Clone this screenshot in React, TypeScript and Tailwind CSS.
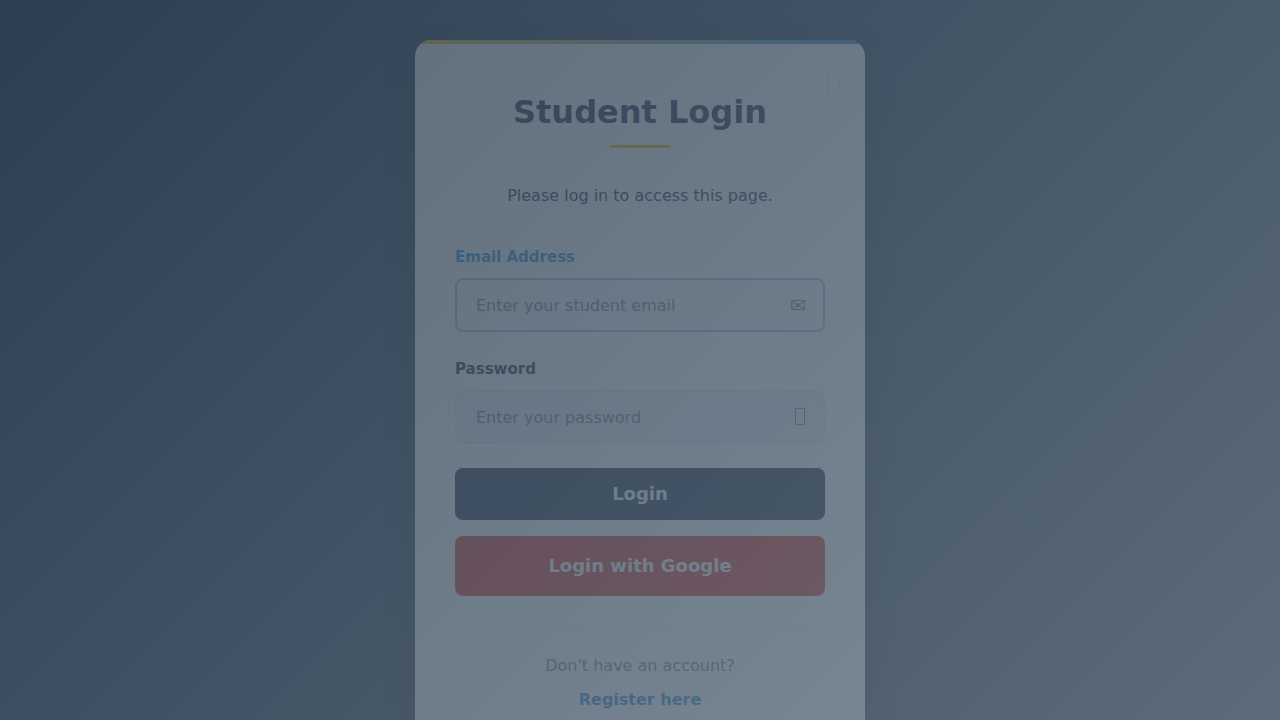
import type { ReactNode } from "react";

type FieldProps = {
  id: string;
  label: string;
  type: string;
  placeholder: string;
  active?: boolean;
  icon: ReactNode;
};

function Field({ id, label, type, placeholder, active = false, icon }: FieldProps) {
  return (
    <div className="mb-6">
      <label
        htmlFor={id}
        className={
          active
            ? "mb-2 block text-[15px] leading-[26px] font-semibold text-[#3498db]"
            : "mb-2 block text-[15px] leading-[26px] font-semibold text-[#2c3e50]"
        }
      >
        {label}
      </label>
      <div className="relative">
        <input
          id={id}
          type={type}
          placeholder={placeholder}
          className={
            active
              ? "block h-[54px] w-full rounded-lg border-2 border-[#a9cbe3] bg-[#f8fbfe] pr-12 pl-[19px] text-base text-[#2c3e50] outline-none placeholder:text-[#7f8c8d]"
              : "block h-[54px] w-full rounded-lg border-2 border-[#ecf0f1] bg-[#f3f5fa] pr-12 pl-[19px] text-base text-[#2c3e50] outline-none placeholder:text-[#7f8c8d]"
          }
        />
        <span
          aria-hidden="true"
          className="pointer-events-none absolute inset-y-0 right-[19px] flex items-center text-[19px] leading-none text-[#7f8c8d]"
        >
          {icon}
        </span>
      </div>
    </div>
  );
}

export default function App() {
  return (
    <main className="flex min-h-screen items-start justify-center bg-linear-[135deg,#2c3e50,#5d6d7e] p-10 font-['DejaVu_Sans',sans-serif] text-base text-[#2c3e50]">
      <section className="relative w-full max-w-[450px] overflow-hidden rounded-2xl bg-white px-10 pt-12 pb-10 opacity-[0.22] shadow-[0_10px_30px_rgba(0,0,0,0.2)]">
        <div className="absolute inset-x-0 top-0 h-1 bg-linear-to-r from-[#f1c40f] to-[#3498db]" />
        <svg
          aria-hidden="true"
          className="absolute top-8 right-6 h-6 w-4"
          viewBox="0 0 16 24"
          fill="none"
          stroke="#2c3e50"
          strokeOpacity="0.1"
        >
          <rect x="2.5" y="1.5" width="12" height="21" />
        </svg>

        <header className="text-center">
          <h1 className="text-[32px] leading-[48px] font-bold">Student Login</h1>
          <div className="mx-auto mt-[9px] h-[3px] w-[60px] rounded-sm bg-[#f1c40f]" />
        </header>

        <p className="my-[35px] text-center leading-[26px]">Please log in to access this page.</p>

        <form onSubmit={(event) => event.preventDefault()}>
          <Field
            id="email"
            label="Email Address"
            type="email"
            placeholder="Enter your student email"
            active
            icon="✉"
          />
          <Field
            id="password"
            label="Password"
            type="password"
            placeholder="Enter your password"
            icon={
              <svg className="h-[18px] w-3" viewBox="0 0 12 18" fill="none" stroke="currentColor">
                <rect x="1.5" y="0.5" width="9" height="16" />
              </svg>
            }
          />
          <button
            type="submit"
            className="block h-[52px] w-full rounded-lg bg-[#2c3e50] text-lg font-semibold text-white"
          >
            Login
          </button>
          <a
            href="#google"
            className="mt-4 flex h-[60px] w-full items-center justify-center rounded-lg bg-[#db4437] text-lg font-semibold text-white"
          >
            Login with Google
          </a>
        </form>

        <footer className="mt-8 border-t border-[#ecf0f1] pt-6 text-center leading-[26px] text-[#7f8c8d]">
          <p>Don't have an account?</p>
          <a href="#register" className="mt-2 inline-block font-semibold text-[#3498db]">
            Register here
          </a>
        </footer>
      </section>
    </main>
  );
}
